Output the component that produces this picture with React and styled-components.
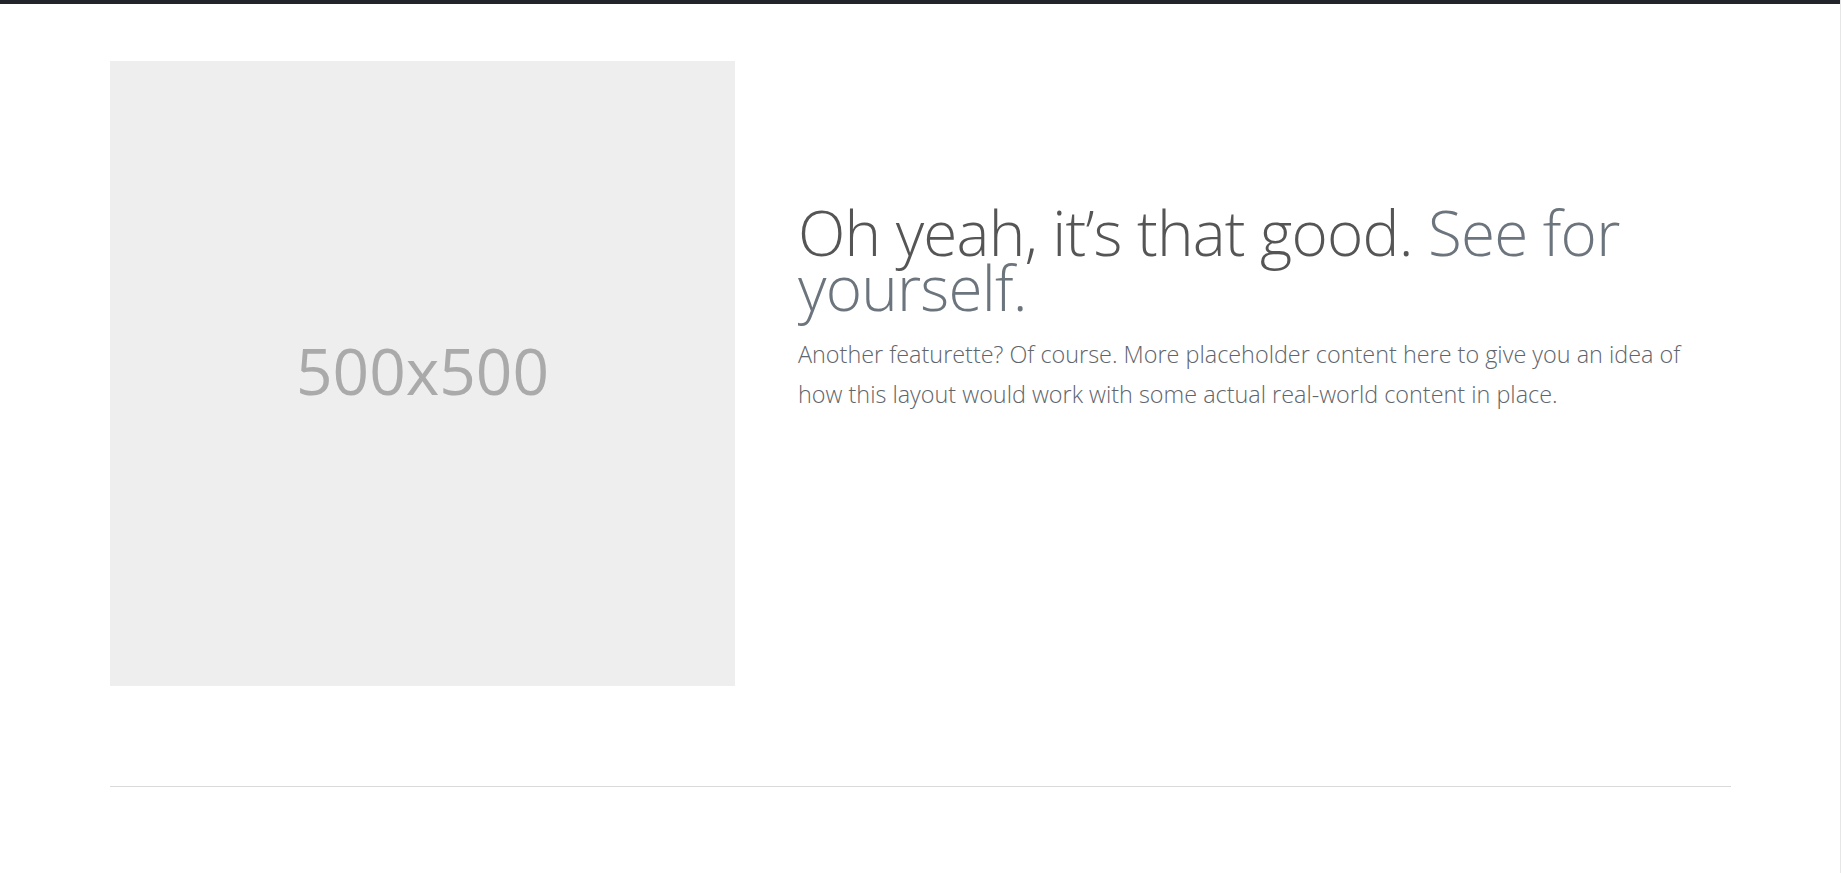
import React from 'react'
import styled, { createGlobalStyle } from 'styled-components'

const GlobalStyle = createGlobalStyle`
    html, body {
        margin:0;
        padding:0;
        background:#fff;
    }
    body {
        font-family:"Open Sans", "Liberation Sans", sans-serif;
    }
`;

const Page = styled.div`
    min-height:100vh;
    width:1841px;
    border-right:1px solid #e6e6e6;
    box-sizing:border-box;
`;

const NavEdge = styled.div`
    height:4px;
    background-color:#212529;
`;

const Container = styled.div`
    width:1621px;
    margin-left:110px;
    padding-top:57px;
`;

const Featurette = styled.div`
    display:grid;
    grid-template-columns:625px 917px;
    column-gap:63px;
    align-items:start;
`;

const Placeholder = styled.div`
    width:625px;
    height:625px;
    padding-bottom:6px;
    box-sizing:border-box;
    background-color:#eeeeee;
    color:#aaaaaa;
    display:flex;
    align-items:center;
    justify-content:center;
    font-size:64px;
    font-weight:400;
`;

const TextCol = styled.div`
    padding-top:144px;
`;

const Heading = styled.h2`
    margin:0 0 19px 0;
    font-size:62px;
    font-weight:300;
    line-height:55px;
    letter-spacing:-0.8px;
    color:#555555;
`;

const Muted = styled.span`
    color:#6c757d;
`;

const Lead = styled.p`
    margin:0;
    font-size:23.4px;
    font-weight:300;
    line-height:40px;
    color:#5f656b;
`;

const Divider = styled.hr`
    margin:100px 0 0 0;
    border:0;
    border-top:1px solid #dadada;
`;

class App extends React.Component {
    render() {
        return (
            <Page>
                <GlobalStyle />
                <NavEdge />
                <Container>
                    <Featurette>
                        <Placeholder>500x500</Placeholder>
                        <TextCol>
                            <Heading>
                                Oh yeah, it’s that good. <Muted>See for yourself.</Muted>
                            </Heading>
                            <Lead>
                                Another featurette? Of course. More placeholder content here to give you an idea of how this layout would work with some actual real-world content in place.
                            </Lead>
                        </TextCol>
                    </Featurette>
                    <Divider />
                </Container>
            </Page>
        )
    }
}

export default App;
